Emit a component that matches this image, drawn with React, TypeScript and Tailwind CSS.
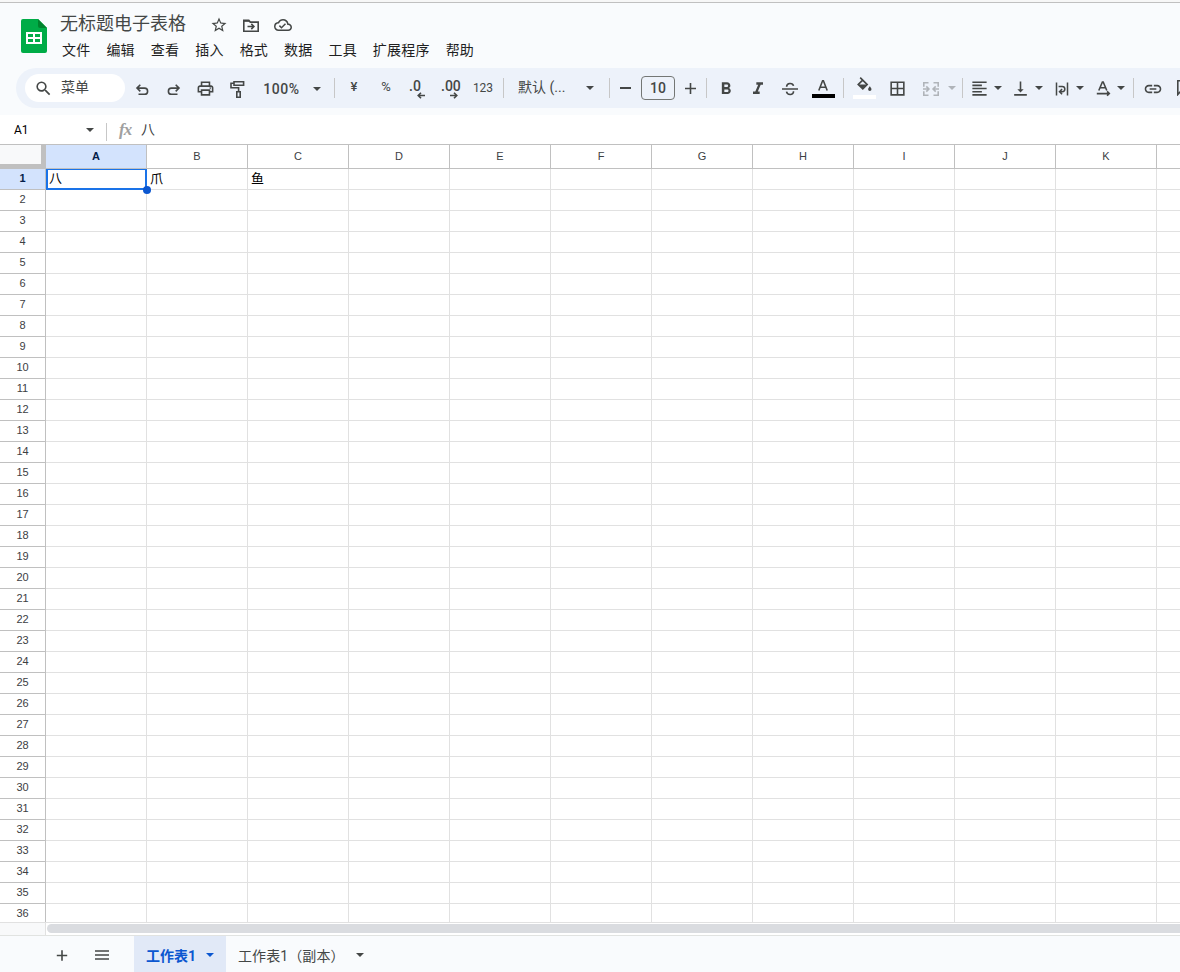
import React from 'react';
import {
  MdOutlineCloudDone,
  MdOutlinePrint,
  MdSearch,
  MdStarBorder,
  MdBorderAll,
  MdFormatAlignLeft,
  MdVerticalAlignBottom,
  MdLink,
  MdFormatBold,
  MdFormatItalic,
} from 'react-icons/md';

const COLUMNS = ['A', 'B', 'C', 'D', 'E', 'F', 'G', 'H', 'I', 'J', 'K', ''];
const ROWS = Array.from({ length: 36 }, (_, i) => i + 1);
const MENUS = ['文件', '编辑', '查看', '插入', '格式', '数据', '工具', '扩展程序', '帮助'];
const CELLS: Record<string, string> = { A1: '八', B1: '爪', C1: '鱼' };

interface SlotProps {
  className: string;
  children?: React.ReactNode;
}

const Slot: React.FC<SlotProps> = ({ className, children }) => (
  <div className={`flex h-10 shrink-0 items-center justify-center ${className}`}>{children}</div>
);

const Caret: React.FC<{ className?: string }> = ({ className = '' }) => (
  <svg width="8" height="4" viewBox="0 0 8 4" className={`shrink-0 ${className}`}>
    <path d="M0 0h8L4 4z" fill="currentColor" />
  </svg>
);

const Divider: React.FC = () => <div className="h-5 w-px shrink-0 bg-[#c7c7c7]" />;

const Glyph: React.FC<{ children: React.ReactNode; className?: string }> = ({ children, className = '' }) => (
  <svg
    width="24"
    height="24"
    viewBox="0 0 24 24"
    fill="none"
    stroke="currentColor"
    strokeWidth="1.6"
    className={`shrink-0 ${className}`}
  >
    {children}
  </svg>
);

const SheetsLogo: React.FC = () => (
  <svg width="26" height="34" viewBox="0 0 26 34" className="shrink-0">
    <path d="M2 0h15l9 9v23a2 2 0 0 1-2 2H2a2 2 0 0 1-2-2V2a2 2 0 0 1 2-2z" fill="#00ac47" />
    <path d="M17 0l9 9h-7a2 2 0 0 1-2-2z" fill="#00832d" />
    <path d="M5 13h16v12H5zM7 15v3h5v-3zM14 15v3h5v-3zM7 20v3h5v-3zM14 20v3h5v-3z" fill="#fff" fillRule="evenodd" />
  </svg>
);

const Header: React.FC = () => (
  <div className="flex h-[65px] shrink-0">
    <div className="ml-[21px] mt-4">
      <SheetsLogo />
    </div>
    <div className="ml-[13px]">
      <div className="flex h-[42px] items-center">
        <h1 className="w-[150px] whitespace-nowrap text-[18px] font-normal leading-none text-[#444746]">
          无标题电子表格
        </h1>
        <MdStarBorder size={18} className="mt-0.5 text-[#444746]" />
        <svg width="16" height="13" viewBox="0 0 16 13" fill="none" stroke="#444746" strokeWidth="1.6" className="ml-[15px] mt-0.5">
          <path d="M.8 1.4h5l1.5 1.7h7.9v9.1H.8zM4.5 7.5h6.3M8.3 4.9l2.6 2.6-2.6 2.6" />
          <path d="M1 2h5" />
        </svg>
        <MdOutlineCloudDone size={18} className="ml-[15px] mt-0.5 text-[#444746]" />
      </div>
      <nav className="-mt-[3px] ml-[2px] flex gap-[16px] text-[14px] leading-4 tracking-[0.2px] text-[#1f1f1f]">
        {MENUS.map((menu) => (
          <span key={menu}>{menu}</span>
        ))}
      </nav>
    </div>
  </div>
);

const Toolbar: React.FC = () => (
  <div className="ml-4 flex h-10 w-[1200px] shrink-0 items-center rounded-l-full bg-[#edf2fa] pl-[9px] text-[#444746]">
    <div className="flex h-7 w-[100px] shrink-0 items-center rounded-full bg-white pl-[9px] text-[14px]">
      <MdSearch size={19} />
      <span className="-mt-0.5 ml-2">菜单</span>
    </div>
    <Slot className="ml-px w-8">
      <Glyph>
        <path d="M10.3 8.8 7 12.1l3.3 3.3M7 12.1h7.5a3.1 3.1 0 0 1 0 6.2H8.5" />
      </Glyph>
    </Slot>
    <Slot className="w-8">
      <Glyph>
        <path d="M13.7 8.8l3.3 3.3-3.3 3.3M17 12.1H9.5a3.1 3.1 0 0 0 0 6.2h6" />
      </Glyph>
    </Slot>
    <Slot className="w-8">
      <MdOutlinePrint size={19} className="mr-px mt-px" />
    </Slot>
    <Slot className="w-8">
      <Glyph>
        <path d="M8 5.8h9.6v3.4H8zM8 7.2H5v4.6h7.6v4M10.8 15.8h3.4v5.4h-3.4z" />
      </Glyph>
    </Slot>
    <Slot className="w-14 pr-px pt-0.5 text-[14px] font-medium tracking-[0.6px]">
      <span>100%</span>
    </Slot>
    <Slot className="w-[24px] justify-start! pl-[3px]">
      <Caret className="mt-px" />
    </Slot>
    <Divider />
    <Slot className="w-[38px] pb-0.5 text-[13px] font-medium">¥</Slot>
    <Slot className="w-[26px] pb-0.5 text-[13px]">%</Slot>
    <Slot className="w-[38px]">
      <div className="relative left-px h-5 w-5">
        <span className="absolute left-0 top-0 text-[14px] font-medium leading-4">.0</span>
        <svg width="8" height="7" viewBox="0 0 8 7" fill="none" stroke="currentColor" strokeWidth="1.6" className="absolute -bottom-px left-[8px]">
          <path d="M8 3.5H1.5M4 .7 1.2 3.5 4 6.3" />
        </svg>
      </div>
    </Slot>
    <Slot className="w-[28px]">
      <div className="relative h-5 w-5">
        <span className="absolute left-0 top-0 text-[14px] font-medium leading-4">.00</span>
        <svg width="8" height="7" viewBox="0 0 8 7" fill="none" stroke="currentColor" strokeWidth="1.6" className="absolute -bottom-px left-[9px]">
          <path d="M0 3.5h6.5M4 .7l2.8 2.8L4 6.3" />
        </svg>
      </div>
    </Slot>
    <Slot className="w-[38px] pr-0.5 text-[12px]">123</Slot>
    <Divider />
    <Slot className="w-[78px] justify-start! pl-[14px] text-[14px]">
      <span className="-mt-0.5 whitespace-nowrap">默认 (...</span>
    </Slot>
    <Slot className="w-[27px] justify-start! pl-1">
      <Caret />
    </Slot>
    <Divider />
    <Slot className="w-[31px]">
      <div className="h-[1.5px] w-[11px] bg-[#444746]" />
    </Slot>
    <div className="flex h-6 w-[34px] shrink-0 items-center justify-center rounded border border-[#747775] pt-px text-[14px] font-medium">
      10
    </div>
    <Slot className="w-[31px]">
      <svg width="11" height="11" viewBox="0 0 11 11" stroke="currentColor" strokeWidth="1.6" className="mr-px">
        <path d="M0 5.5h11M5.5 0v11" />
      </svg>
    </Slot>
    <Divider />
    <Slot className="w-[38px]">
      <MdFormatBold size={20} className="mt-0.5" />
    </Slot>
    <Slot className="w-[26px]">
      <MdFormatItalic size={20} className="mt-0.5" />
    </Slot>
    <Slot className="w-[38px]">
      <Glyph className="mt-px">
        <path d="M4 12h16M8.6 9.8c0-4.4 6.3-4.2 6.9-.9M8.5 14.7c.8 4 7.3 3.7 7-.4" />
      </Glyph>
    </Slot>
    <Slot className="w-[28px]">
      <div className="flex h-5 w-[23px] flex-col items-center justify-end">
        <svg width="10" height="11" viewBox="0 0 10 11" fill="none" stroke="currentColor" strokeWidth="1.6">
          <path d="M.8 10.5 4.6.8h.8l3.8 9.7M2.2 7.2h5.6" />
        </svg>
        <div className="mt-[3px] h-1 w-full bg-black" />
      </div>
    </Slot>
    <Slot className="w-1.5" />
    <Divider />
    <Slot className="w-[40px]">
      <div className="flex h-[22px] w-[23px] flex-col items-center">
        <svg width="15" height="15" viewBox="0 0 15 15" className="shrink-0">
          <path d="M3.2.6l7 7-4.4 4.4L1.2 7.6l4.2-4.2" fill="none" stroke="#444746" strokeWidth="1.6" />
          <path d="M1.5 7.5h8.6l-4.3 4.2zM12.8 9.3s-1.7 2-1.7 3a1.7 1.7 0 0 0 3.4 0c0-1-1.7-3-1.7-3z" fill="#444746" />
        </svg>
        <div className="mt-[3px] h-1 w-full shrink-0 bg-white" />
      </div>
    </Slot>
    <Slot className="w-[28px]">
      <MdBorderAll size={19} className="mr-px mt-px" />
    </Slot>
    <Slot className="w-[38px] text-[#b0b4b9]">
      <Glyph className="mt-0.5">
        <path d="M9.5 5.8H4.8v4M14.5 5.8h4.7v4M9.5 18.2H4.8v-4M14.5 18.2h4.7v-4M4 12h5.5M7.3 9.4 9.9 12l-2.6 2.6M20 12h-5.5M16.7 9.4 14.1 12l2.6 2.6" />
      </Glyph>
    </Slot>
    <Slot className="w-[12px] pr-2 text-[#b0b4b9]">
      <Caret />
    </Slot>
    <Divider />
    <Slot className="ml-[5px] w-[24px]">
      <MdFormatAlignLeft size={19} className="mr-px mt-px" />
    </Slot>
    <Slot className="w-[12px]">
      <Caret />
    </Slot>
    <Slot className="ml-[5px] w-[24px]">
      <MdVerticalAlignBottom size={19} className="mr-px mt-px" />
    </Slot>
    <Slot className="w-[12px]">
      <Caret />
    </Slot>
    <Slot className="ml-[5px] w-[24px]">
      <Glyph className="mt-0.5">
        <path d="M6.5 5.5v13M17.5 5.5v13M8.6 9.4h3.6a2.6 2.6 0 0 1 0 5.3h-2M12.1 12.1l-2.6 2.6 2.6 2.6" strokeWidth="1.5" />
      </Glyph>
    </Slot>
    <Slot className="w-[12px]">
      <Caret />
    </Slot>
    <Slot className="ml-[5px] w-[24px]">
      <Glyph>
        <path d="M7.8 14.5 11.4 6h.8l3.6 8.5M9.2 11.7h5.2M5.8 17.6h12.4M16.1 15.4l2.2 2.2-2.2 2.2" />
      </Glyph>
    </Slot>
    <Slot className="w-[12px]">
      <Caret />
    </Slot>
    <Slot className="w-[6px]" />
    <Divider />
    <Slot className="w-[38px]">
      <MdLink size={20} className="mt-px" />
    </Slot>
    <Slot className="ml-[5px] w-5 justify-start!">
      <svg width="16" height="16" viewBox="0 0 16 16" fill="none" stroke="currentColor" strokeWidth="1.6">
        <path d="M.8 14.5V.8h14v11H3.3z" />
      </svg>
    </Slot>
  </div>
);

const FormulaBar: React.FC = () => (
  <div className="mt-[7px] flex h-[29px] shrink-0 items-center bg-white">
    <div className="flex w-[106px] items-center pl-[14px] pr-[12px] text-[12px] text-black">
      <span className="flex-1">A1</span>
      <Caret className="text-[#444746]" />
    </div>
    <div className="mt-1 h-[18px] w-px bg-[#c7c7c7]" />
    <span className="ml-[12px] w-[22px] font-['Liberation_Serif',serif] text-[17px] font-bold italic leading-none tracking-[-1px] text-[#a0a0a0]">
      fx
    </span>
    <span className="text-[14px] text-[#3c4043]">八</span>
  </div>
);

const Grid: React.FC = () => (
  <div className="h-[779px] shrink-0 overflow-hidden border-y border-t-[#c0c0c0] border-b-[#e1e1e1] bg-white font-['Liberation_Sans','Noto_Sans_CJK_SC',sans-serif]">
    <div className="flex h-6 w-[1258px] border-b border-[#c0c0c0] text-[11px] text-[#3c4043]">
      <div className="w-[46px] shrink-0 border-b-4 border-r-[5px] border-[#c0c0c0] bg-[#f8f9fa]" />
      {COLUMNS.map((col, i) => (
        <div
          key={i}
          className={`flex w-[101px] shrink-0 items-center justify-center border-r border-[#c0c0c0] ${
            col === 'A' ? 'bg-[#d3e3fd] font-bold text-[#041e49]' : ''
          }`}
        >
          {col}
        </div>
      ))}
    </div>
    {ROWS.map((row) => (
      <div key={row} className="flex h-[21px] w-[1258px]">
        <div
          className={`flex w-[46px] shrink-0 items-center justify-center border-b border-r border-[#c0c0c0] pb-px text-[11px] ${
            row === 1 ? 'bg-[#d3e3fd] font-bold text-[#041e49]' : 'text-[#3c4043]'
          }`}
        >
          {row}
        </div>
        {COLUMNS.map((col, i) => (
          <div
            key={i}
            className="relative w-[101px] shrink-0 border-b border-r border-[#e1e1e1] pl-[3px] text-[13px] leading-5 text-black"
          >
            {CELLS[`${col}${row}`]}
            {col === 'A' && row === 1 && (
              <>
                <div className="absolute -bottom-px -right-px left-0 top-0 border-2 border-t border-[#1a73e8]" />
                <div className="absolute -bottom-[5px] -right-[5px] z-10 size-2 rounded-full bg-[#0b57d0]" />
              </>
            )}
          </div>
        ))}
      </div>
    ))}
  </div>
);

const SheetTabs: React.FC = () => (
  <div className="flex h-[37px] shrink-0 border-t border-[#e1e3e1] bg-[#f9fbfd] text-[14px] text-[#444746]">
    <div className="flex w-[134px] items-center pl-[56px] pt-0.5">
      <svg width="12" height="11" viewBox="0 0 12 11" stroke="currentColor" strokeWidth="1.6">
        <path d="M.8 5.5h10.4M6 .3v10.4" />
      </svg>
      <svg width="14" height="10" viewBox="0 0 14 10" stroke="currentColor" strokeWidth="1.6" className="ml-[27px]">
        <path d="M0 1h14M0 5h14M0 9h14" />
      </svg>
    </div>
    <div className="flex w-[92px] items-center bg-[#e1e9f7] pl-3 font-bold text-[#0b57d0]">
      <span className="w-[60px] whitespace-nowrap pt-1">工作表1</span>
      <Caret className="mt-0.5" />
    </div>
    <div className="flex items-center pl-3">
      <span className="w-[118px] whitespace-nowrap pt-1 tracking-[0.1px]">工作表1（副本）</span>
      <Caret className="mt-0.5" />
    </div>
  </div>
);

export default function App() {
  return (
    <div className="flex h-[972px] w-[1180px] flex-col overflow-hidden bg-[#f9fbfd] font-[Roboto,'Noto_Sans_CJK_SC',sans-serif]">
      <div className="h-[3px] shrink-0 border-b border-[#c0c0c0] bg-[#f7f7f7]" />
      <Header />
      <Toolbar />
      <FormulaBar />
      <Grid />
      <div className="flex h-3 shrink-0 bg-white">
        <div className="w-[46px] shrink-0 border-r border-[#e1e1e1] bg-[#f8f9fa]" />
        <div className="ml-px mt-px h-[9px] flex-1 rounded-l-full bg-[#dadce0]" />
      </div>
      <SheetTabs />
    </div>
  );
}
